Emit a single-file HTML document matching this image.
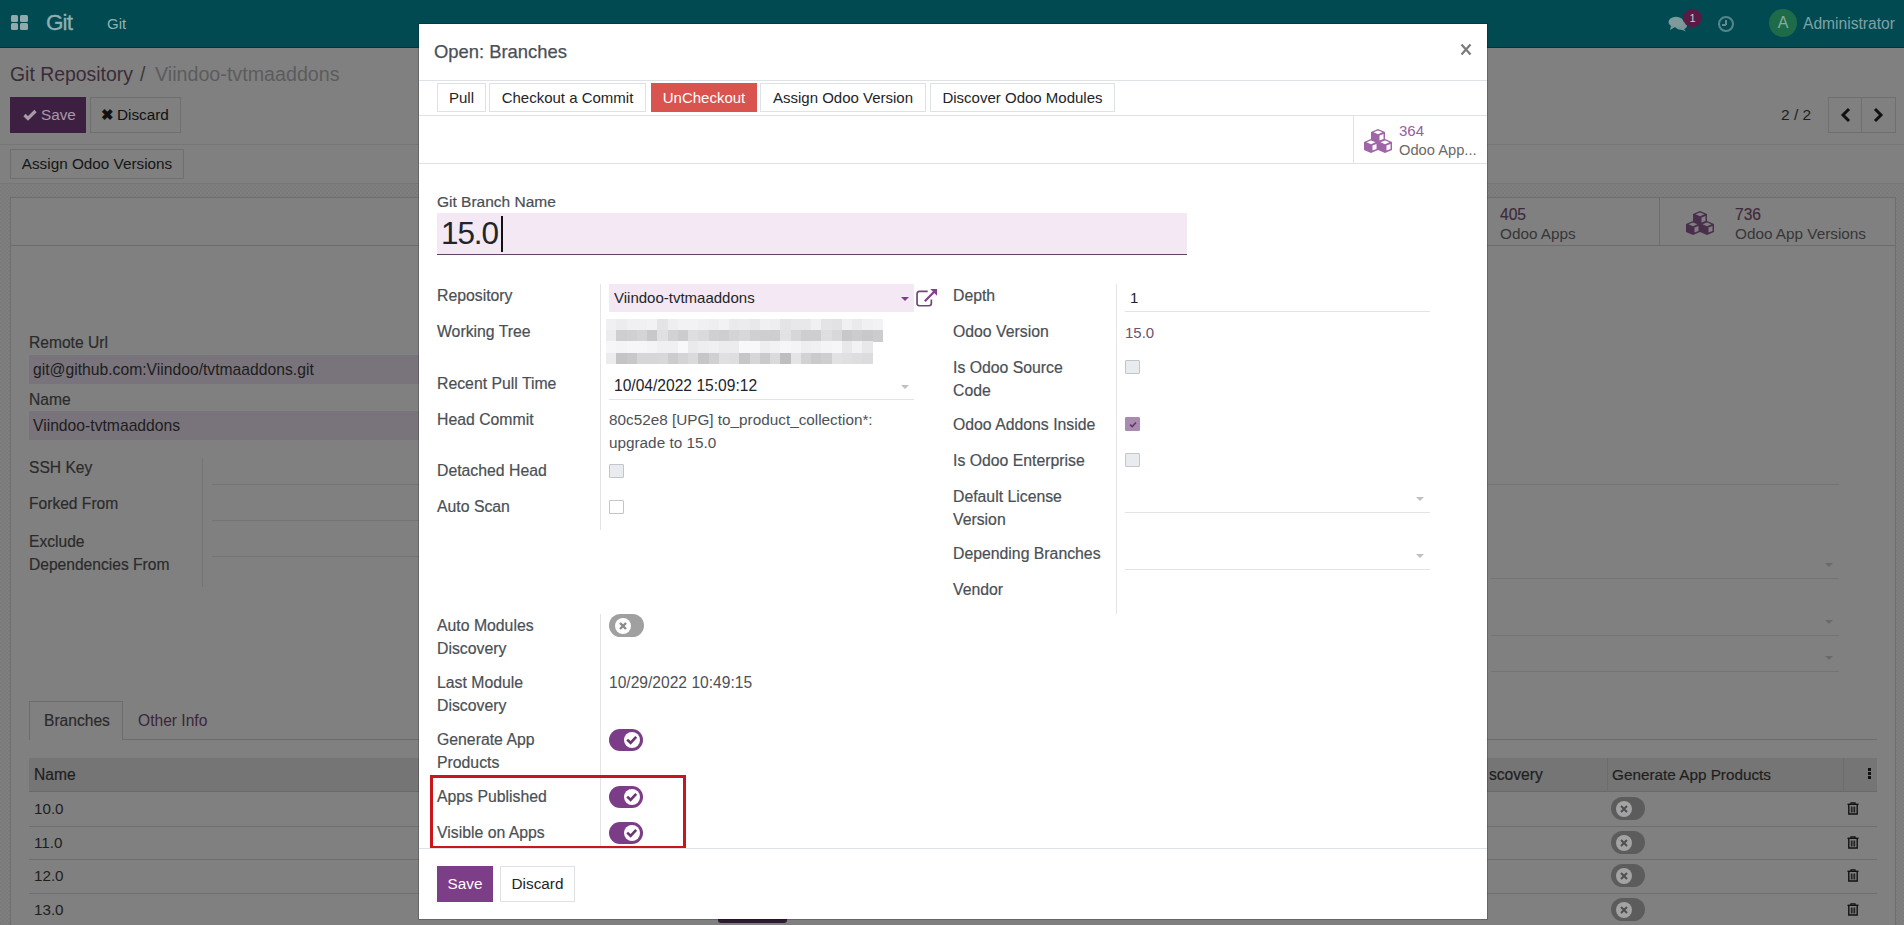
<!DOCTYPE html>
<html><head><meta charset="utf-8">
<style>
*{box-sizing:border-box;margin:0;padding:0}
html,body{width:1904px;height:925px;overflow:hidden}
body{font-family:"Liberation Sans",sans-serif;font-size:15px;color:#212529;background:#808080;position:relative}
.a{position:absolute;white-space:nowrap}
/* background page (already darkened) */
#nav{left:0;top:0;width:1904px;height:48px;background:#024a51;border-bottom:1px solid #01363b}
#cp{left:0;top:48px;width:1904px;height:97px;background:#808080;border-bottom:1px solid #767676}
#sb{left:0;top:145px;width:1904px;height:39px;background:#808080;border-bottom:1px solid #767676}
#bgsheet{left:0;top:184px;width:1904px;height:741px;background:repeating-conic-gradient(#7a7a7a 0 25%,#7f7f7f 0 50%) 0 0/4px 4px}
#sheet{left:10px;top:197px;width:1886px;height:740px;background:#808080;border:1px solid #6e6e6e}
.bbtn{border:1px solid #6f6f6f;background:#808080;color:#111}
.dim{color:#2a2a2a}
/* modal */
#modal{left:418px;top:23px;width:1070px;height:897px;background:#fff;background-clip:padding-box;border:1px solid rgba(0,0,0,.2)}
.mb{position:absolute;border:1px solid #dee2e6;background:#fff;color:#212529;font-size:15px;height:29px;line-height:27px;text-align:center}
.lbl{position:absolute;color:#4a4f55;font-size:15.8px;line-height:23px;white-space:nowrap;-webkit-text-stroke:0.2px #4a4f55}
.val{position:absolute;color:#4c5157;font-size:15px;line-height:23px;white-space:nowrap}
.sep{position:absolute;width:1px;background:#e5e5e5}
.chk{position:absolute;width:15px;height:14px;border:1px solid #c4c4cc;border-radius:1px;background:#fff}
.tog{position:absolute;width:34px;height:22px;border-radius:11px;background:#7b3d88}
.tog i{position:absolute;right:3px;top:3px;width:16px;height:16px;border-radius:50%;background:#fff}
</style></head>
<body>
<!-- NAVBAR -->
<div id="nav" class="a">
  <div class="a" style="left:10.8px;top:15.2px;width:7.6px;height:7.2px;background:#93a9ac;border-radius:1.5px"></div>
  <div class="a" style="left:19.8px;top:15.2px;width:8px;height:7.2px;background:#93a9ac;border-radius:1.5px"></div>
  <div class="a" style="left:10.8px;top:23.4px;width:7.6px;height:7px;background:#93a9ac;border-radius:1.5px"></div>
  <div class="a" style="left:19.8px;top:23.4px;width:8px;height:7px;background:#93a9ac;border-radius:1.5px"></div>
  <div class="a" style="left:46px;top:9.5px;font-size:22.5px;line-height:26px;letter-spacing:-0.9px;color:#8fb0b2;-webkit-text-stroke:0.3px #8fb0b2">Git</div>
  <div class="a" style="left:107px;top:14px;font-size:15px;line-height:20px;color:#8fb2b4">Git</div>
  <svg class="a" style="left:1668px;top:16px" width="20" height="16" viewBox="0 0 20 16"><ellipse cx="8" cy="6" rx="7.5" ry="5.2" fill="#7f9a9b"/><path d="M3 10 L2 14 L7 11z" fill="#7f9a9b"/><ellipse cx="13" cy="9.5" rx="6" ry="4.3" fill="#7f9a9b" opacity=".95"/><path d="M15 12 L18 15.5 L12 13z" fill="#7f9a9b"/></svg>
  <div class="a" style="left:1683px;top:9px;width:19px;height:18px;border-radius:9px;background:#5a1a44;color:#d8c6d2;font-size:11px;line-height:18px;text-align:center">1</div>
  <div class="a" style="left:1718px;top:16px;width:16px;height:16px;border-radius:50%;border:2px solid #55878a"></div>
  <div class="a" style="left:1725px;top:20px;width:1.5px;height:5px;background:#5f8c8f"></div>
  <div class="a" style="left:1722px;top:24px;width:4px;height:1.5px;background:#5f8c8f"></div>
  <div class="a" style="left:1769px;top:9px;width:28px;height:28px;border-radius:50%;background:#1e6b4a;color:#86ab98;font-size:16px;line-height:28px;text-align:center">A</div>
  <div class="a" style="left:1803px;top:14px;font-size:15.6px;line-height:20px;color:#7fa2a4">Administrator</div>
</div>
<!-- CONTROL PANEL -->
<div id="cp" class="a">
  <div class="a" style="left:10px;top:13px;font-size:19.4px;line-height:26px;color:#3b2b38">Git Repository</div><div class="a" style="left:140px;top:13px;font-size:19.4px;line-height:26px;color:#3a3a3a">/</div><div class="a" style="left:155px;top:13px;font-size:19.7px;line-height:26px;color:#5c5c5c">Viindoo-tvtmaaddons</div>
  <div class="a" style="left:10px;top:49px;width:76px;height:36px;background:#3d1f42;color:#a99aab;font-size:15.3px;line-height:36px"><svg class="a" style="left:13px;top:12px" width="14" height="12" viewBox="0 0 14 12"><path d="M1.5 6 L5 9.5 L12.5 2" stroke="#a99aab" stroke-width="3.2" fill="none"/></svg><span style="position:absolute;left:31px">Save</span></div>
  <div class="a bbtn" style="left:90px;top:49px;width:91px;height:36px;font-size:15.3px;line-height:34px"><span style="position:absolute;left:10px;top:0;font-weight:bold">&#10006;</span><span style="position:absolute;left:26px">Discard</span></div>
  <div class="a" style="left:1781px;top:57px;font-size:15.5px;line-height:20px;color:#1e1e1e">2 / 2</div>
  <div class="a bbtn" style="left:1828px;top:49px;width:34px;height:36px"></div>
  <div class="a bbtn" style="left:1861px;top:49px;width:35px;height:36px"></div>
  <svg class="a" style="left:1840px;top:59px" width="12" height="16" viewBox="0 0 12 16"><path d="M9 2 L3 8 L9 14" stroke="#111" stroke-width="3" fill="none"/></svg>
  <svg class="a" style="left:1872px;top:59px" width="12" height="16" viewBox="0 0 12 16"><path d="M3 2 L9 8 L3 14" stroke="#111" stroke-width="3" fill="none"/></svg>
</div>
<div id="sb" class="a">
  <div class="a bbtn" style="left:10px;top:4px;width:174px;height:30px;font-size:15.3px;line-height:28px;text-align:center;color:#151515">Assign Odoo Versions</div>
</div>
<div id="bgsheet" class="a"></div>
<div id="sheet" class="a">
  <div class="a" style="left:0;top:47px;width:1884px;height:1px;background:#6c6c6c"></div>
  <div class="a" style="left:1648px;top:0;width:1px;height:47px;background:#6c6c6c"></div>
  
  <div class="a" style="left:1489px;top:8px;font-size:15.6px;line-height:18px;color:#3e2a3c;-webkit-text-stroke:0.2px #3e2a3c">405</div>
  <div class="a" style="left:1489px;top:27px;font-size:15.3px;line-height:18px;color:#363636">Odoo Apps</div>
  <svg class="a" style="left:1674px;top:12px" width="31" height="26" viewBox="0 0 31 26">
    <g fill="#4a2f4c"><path d="M8 4 L15 1 L22 4 L22 12 L15 15 L8 12z"/><path d="M1 14 L8 11 L15 14 L15 22 L8 25 L1 22z"/><path d="M15 14 L22 11 L29 14 L29 22 L22 25 L15 22z"/></g>
    <g fill="#808080"><path d="M10.5 4.3 L15 2.5 L19.5 4.3 L15 6.2z"/><path d="M16.5 7.5 L20.5 6 L20.5 11 L16.5 12.6z"/><path d="M3.5 14.3 L8 12.5 L12.5 14.3 L8 16.2z"/><path d="M9.5 17.5 L13.5 16 L13.5 21 L9.5 22.6z"/><path d="M17.5 14.3 L22 12.5 L26.5 14.3 L22 16.2z"/><path d="M23.5 17.5 L27.5 16 L27.5 21 L23.5 22.6z"/></g>
  </svg>
  <div class="a" style="left:1724px;top:8px;font-size:15.6px;line-height:18px;color:#3e2a3c;-webkit-text-stroke:0.2px #3e2a3c">736</div>
  <div class="a" style="left:1724px;top:27px;font-size:15.3px;line-height:18px;color:#363636">Odoo App Versions</div>

  <div class="a dim" style="left:18px;top:135px;font-size:15.6px;line-height:20px;color:#2b2b2b;-webkit-text-stroke:0.2px #2b2b2b">Remote Url</div>
  <div class="a" style="left:18px;top:157px;width:800px;height:29px;background:#79737b"></div>
  <div class="a" style="left:22px;top:162px;font-size:15.7px;line-height:20px;color:#1d1d1d">git@github.com:Viindoo/tvtmaaddons.git</div>
  <div class="a dim" style="left:18px;top:192px;font-size:15.6px;line-height:20px;color:#2b2b2b;-webkit-text-stroke:0.2px #2b2b2b">Name</div>
  <div class="a" style="left:18px;top:213px;width:800px;height:29px;background:#79737b"></div>
  <div class="a" style="left:22px;top:218px;font-size:15.7px;line-height:20px;color:#1d1d1d">Viindoo-tvtmaaddons</div>
  <div class="a" style="left:18px;top:260px;font-size:15.6px;line-height:20px;color:#2b2b2b;-webkit-text-stroke:0.2px #2b2b2b">SSH Key</div>
  <div class="a" style="left:18px;top:296px;font-size:15.6px;line-height:20px;color:#2b2b2b;-webkit-text-stroke:0.2px #2b2b2b">Forked From</div>
  <div class="a" style="left:18px;top:332px;font-size:15.6px;line-height:23px;color:#2b2b2b;-webkit-text-stroke:0.2px #2b2b2b">Exclude<br>Dependencies From</div>
  <div class="a" style="left:191px;top:260px;width:1px;height:129px;background:#747474"></div>
  <div class="a" style="left:201px;top:286px;width:700px;height:1px;background:#747474"></div><div class="a" style="left:1300px;top:286px;width:528px;height:1px;background:#747474"></div>
  <div class="a" style="left:201px;top:322px;width:700px;height:1px;background:#747474"></div>
  <div class="a" style="left:201px;top:358px;width:700px;height:1px;background:#747474"></div>
  <div class="a" style="left:1480px;top:380px;width:348px;height:1px;background:#747474"></div>
  <div class="a" style="left:1480px;top:437px;width:348px;height:1px;background:#747474"></div>
  <div class="a" style="left:1480px;top:473px;width:348px;height:1px;background:#747474"></div>
  <svg class="a" style="left:1814px;top:365px" width="8" height="4"><path d="M0 0 L8 0 L4 4z" fill="#6a6a6a"/></svg>
  <svg class="a" style="left:1814px;top:422px" width="8" height="4"><path d="M0 0 L8 0 L4 4z" fill="#6a6a6a"/></svg>
  <svg class="a" style="left:1814px;top:458px" width="8" height="4"><path d="M0 0 L8 0 L4 4z" fill="#6a6a6a"/></svg>

  <!-- tabs -->
  <div class="a" style="left:18px;top:541px;width:1848px;height:1px;background:#6c6c6c"></div>
  <div class="a" style="left:18px;top:503px;width:94px;height:39px;border:1px solid #6c6c6c;border-bottom:none;background:#808080"></div>
  <div class="a" style="left:33px;top:513px;font-size:15.6px;line-height:20px;color:#2b2b2b;-webkit-text-stroke:0.2px #2b2b2b">Branches</div>
  <div class="a" style="left:127px;top:513px;font-size:15.6px;line-height:20px;color:#3b2638">Other Info</div>
  <!-- table -->
  <div class="a" style="left:18px;top:560px;width:1848px;height:34px;background:#757575;border-bottom:1px solid #6a6a6a"></div>
  <div class="a" style="left:23px;top:567px;font-size:15.6px;line-height:20px;color:#1e1e1e;-webkit-text-stroke:0.2px #1e1e1e">Name</div>
  <div class="a" style="left:1478px;top:567px;font-size:15.6px;line-height:20px;color:#1e1e1e;-webkit-text-stroke:0.2px #1e1e1e">scovery</div>
  <div class="a" style="left:1596px;top:560px;width:1px;height:34px;background:#6c6c6c"></div>
  <div class="a" style="left:1601px;top:567px;font-size:15.3px;line-height:20px;color:#1e1e1e;-webkit-text-stroke:0.2px #1e1e1e">Generate App Products</div>
  <div class="a" style="left:1832px;top:560px;width:1px;height:34px;background:#6c6c6c"></div>
  <div class="a" style="left:1857px;top:570px;width:3px;height:3px;background:#111;box-shadow:0 4px 0 #111,0 8px 0 #111"></div>
<div class="a" style="left:18px;top:628px;width:1848px;height:1px;background:#6e6e6e"></div>
<div class="a" style="left:23px;top:601px;font-size:15.2px;line-height:20px;color:#1e1e1e">10.0</div>
<div class="a" style="left:1600px;top:599px;width:34px;height:23px;border-radius:12px;background:#5c5c5c"><div class="a" style="left:5px;top:3.5px;width:16px;height:16px;border-radius:50%;background:#a3a3a3"></div><svg class="a" style="left:9px;top:7.5px" width="8" height="8"><path d="M1 1 L7 7 M7 1 L1 7" stroke="#4e4e52" stroke-width="2"/></svg></div>
<svg class="a" style="left:1836px;top:604px" width="12" height="13" viewBox="0 0 12 13"><path d="M4 2 V0.8 H8 V2" stroke="#111" stroke-width="1.2" fill="none"/><path d="M0.5 2.3 H11.5" stroke="#111" stroke-width="1.4"/><path d="M1.8 3 V12 H10.2 V3" stroke="#111" stroke-width="1.4" fill="none"/><path d="M4.3 4.5 V10.5 M6 4.5 V10.5 M7.7 4.5 V10.5" stroke="#111" stroke-width="1"/></svg>
<div class="a" style="left:18px;top:661px;width:1848px;height:1px;background:#6e6e6e"></div>
<div class="a" style="left:23px;top:635px;font-size:15.2px;line-height:20px;color:#1e1e1e">11.0</div>
<div class="a" style="left:1600px;top:633px;width:34px;height:23px;border-radius:12px;background:#5c5c5c"><div class="a" style="left:5px;top:3.5px;width:16px;height:16px;border-radius:50%;background:#a3a3a3"></div><svg class="a" style="left:9px;top:7.5px" width="8" height="8"><path d="M1 1 L7 7 M7 1 L1 7" stroke="#4e4e52" stroke-width="2"/></svg></div>
<svg class="a" style="left:1836px;top:638px" width="12" height="13" viewBox="0 0 12 13"><path d="M4 2 V0.8 H8 V2" stroke="#111" stroke-width="1.2" fill="none"/><path d="M0.5 2.3 H11.5" stroke="#111" stroke-width="1.4"/><path d="M1.8 3 V12 H10.2 V3" stroke="#111" stroke-width="1.4" fill="none"/><path d="M4.3 4.5 V10.5 M6 4.5 V10.5 M7.7 4.5 V10.5" stroke="#111" stroke-width="1"/></svg>
<div class="a" style="left:18px;top:695px;width:1848px;height:1px;background:#6e6e6e"></div>
<div class="a" style="left:23px;top:668px;font-size:15.2px;line-height:20px;color:#1e1e1e">12.0</div>
<div class="a" style="left:1600px;top:666px;width:34px;height:23px;border-radius:12px;background:#5c5c5c"><div class="a" style="left:5px;top:3.5px;width:16px;height:16px;border-radius:50%;background:#a3a3a3"></div><svg class="a" style="left:9px;top:7.5px" width="8" height="8"><path d="M1 1 L7 7 M7 1 L1 7" stroke="#4e4e52" stroke-width="2"/></svg></div>
<svg class="a" style="left:1836px;top:671px" width="12" height="13" viewBox="0 0 12 13"><path d="M4 2 V0.8 H8 V2" stroke="#111" stroke-width="1.2" fill="none"/><path d="M0.5 2.3 H11.5" stroke="#111" stroke-width="1.4"/><path d="M1.8 3 V12 H10.2 V3" stroke="#111" stroke-width="1.4" fill="none"/><path d="M4.3 4.5 V10.5 M6 4.5 V10.5 M7.7 4.5 V10.5" stroke="#111" stroke-width="1"/></svg>
<div class="a" style="left:18px;top:999px;width:1848px;height:1px;background:#6e6e6e"></div>
<div class="a" style="left:23px;top:702px;font-size:15.2px;line-height:20px;color:#1e1e1e">13.0</div>
<div class="a" style="left:1600px;top:700px;width:34px;height:23px;border-radius:12px;background:#5c5c5c"><div class="a" style="left:5px;top:3.5px;width:16px;height:16px;border-radius:50%;background:#a3a3a3"></div><svg class="a" style="left:9px;top:7.5px" width="8" height="8"><path d="M1 1 L7 7 M7 1 L1 7" stroke="#4e4e52" stroke-width="2"/></svg></div>
<svg class="a" style="left:1836px;top:705px" width="12" height="13" viewBox="0 0 12 13"><path d="M4 2 V0.8 H8 V2" stroke="#111" stroke-width="1.2" fill="none"/><path d="M0.5 2.3 H11.5" stroke="#111" stroke-width="1.4"/><path d="M1.8 3 V12 H10.2 V3" stroke="#111" stroke-width="1.4" fill="none"/><path d="M4.3 4.5 V10.5 M6 4.5 V10.5 M7.7 4.5 V10.5" stroke="#111" stroke-width="1"/></svg>
  <div class="a" style="left:707px;top:721px;width:69px;height:4px;background:#2e1a33;border-radius:0 0 3px 3px"></div>
</div>
<div id="modal" class="a">
  <!-- header -->
  <div class="a" style="left:15px;top:15.5px;font-size:18.4px;line-height:24px;color:#495057;-webkit-text-stroke:0.25px #495057">Open: Branches</div>
  <svg class="a" style="left:1041px;top:19px" width="12" height="13" viewBox="0 0 12 13"><path d="M1.5 1.5 L10.5 11.5 M10.5 1.5 L1.5 11.5" stroke="#7a7a7a" stroke-width="2.2"/></svg>
  <div class="a" style="left:0;top:56px;width:1068px;height:1px;background:#dee2e6"></div>
  <!-- button bar -->
  <div class="mb" style="left:18px;top:59px;width:49px">Pull</div>
  <div class="mb" style="left:70px;top:59px;width:157px">Checkout a Commit</div>
  <div class="mb" style="left:232px;top:59px;width:106px;background:#d9534f;border-color:#d9534f;color:#fff">UnCheckout</div>
  <div class="mb" style="left:341px;top:59px;width:166px">Assign Odoo Version</div>
  <div class="mb" style="left:511px;top:59px;width:185px">Discover Odoo Modules</div>
  <div class="a" style="left:0;top:91px;width:1068px;height:1px;background:#dee2e6"></div>
  <!-- button box -->
  <div class="a" style="left:934px;top:92px;width:1px;height:47px;background:#dee2e6"></div>
  <svg class="a" style="left:944px;top:104px" width="31" height="26" viewBox="0 0 31 26">
    <g fill="#a065a8">
      <path d="M8 4 L15 1 L22 4 L22 12 L15 15 L8 12z"/>
      <path d="M1 14 L8 11 L15 14 L15 22 L8 25 L1 22z"/>
      <path d="M15 14 L22 11 L29 14 L29 22 L22 25 L15 22z"/>
    </g>
    <g fill="#fff">
      <path d="M10.5 4.3 L15 2.5 L19.5 4.3 L15 6.2z"/>
      <path d="M16.5 7.5 L20.5 6 L20.5 11 L16.5 12.6z"/>
      <path d="M3.5 14.3 L8 12.5 L12.5 14.3 L8 16.2z"/>
      <path d="M9.5 17.5 L13.5 16 L13.5 21 L9.5 22.6z"/>
      <path d="M17.5 14.3 L22 12.5 L26.5 14.3 L22 16.2z"/>
      <path d="M23.5 17.5 L27.5 16 L27.5 21 L23.5 22.6z"/>
    </g>
  </svg>
  <div class="a" style="left:980px;top:98px;font-size:15px;line-height:18px;color:#9a5ba3">364</div>
  <div class="a" style="left:980px;top:117px;font-size:14.7px;line-height:18px;color:#6a6a6a">Odoo App...</div>
  <div class="a" style="left:0;top:139px;width:1068px;height:1px;background:#dee2e6"></div>

  <!-- title field -->
  <div class="lbl" style="left:18px;top:166px;font-size:15.5px">Git Branch Name</div>
  <div class="a" style="left:18px;top:189px;width:750px;height:42px;background:#f3e8f4;border-bottom:1px solid #5e4663"></div>
  <div class="a" style="left:22px;top:190px;font-size:31.5px;line-height:38px;letter-spacing:-1.1px;color:#212529">15.0</div>
  <div class="a" style="left:82px;top:192px;width:2px;height:36px;background:#111"></div>

  <!-- left group -->
  <div class="lbl" style="left:18px;top:260px">Repository</div>
  <div class="lbl" style="left:18px;top:296px">Working Tree</div>
  <div class="lbl" style="left:18px;top:348px">Recent Pull Time</div>
  <div class="lbl" style="left:18px;top:384px">Head Commit</div>
  <div class="lbl" style="left:18px;top:435px">Detached Head</div>
  <div class="lbl" style="left:18px;top:471px">Auto Scan</div>
  <div class="sep" style="left:181px;top:260px;height:246px"></div>

  <div class="a" style="left:190px;top:260px;width:305px;height:28px;background:#f3e8f4"></div>
  <div class="val" style="left:195px;top:262px;color:#212529">Viindoo-tvtmaaddons</div>
  <svg class="a" style="left:482px;top:273px" width="8" height="4"><path d="M0 0 L8 0 L4 4z" fill="#7c3e86"/></svg>
  <svg class="a" style="left:496px;top:264px" width="23" height="20" viewBox="0 0 23 20"><path d="M12.7 3.45 H4.5 Q2.05 3.45 2.05 5.9 V15.3 Q2.05 17.75 4.5 17.75 H13.9 Q16.35 17.75 16.35 15.3 V11.5" stroke="#6e4a70" stroke-width="1.7" fill="none"/><path d="M9.8 13.2 L19.2 3.8" stroke="#83408c" stroke-width="2.3"/><path d="M15.3 1 H22 V7.8z" fill="#83408c"/></svg>

  <svg class="a" style="left:187px;top:295px" width="278" height="46" shape-rendering="crispEdges"><rect x="0.00" y="0.00" width="10.55" height="11.50" fill="rgb(240,240,242)"/><rect x="10.25" y="0.00" width="10.55" height="11.50" fill="rgb(236,236,238)"/><rect x="20.50" y="0.00" width="10.55" height="11.50" fill="rgb(240,240,242)"/><rect x="30.75" y="0.00" width="10.55" height="11.50" fill="rgb(240,240,242)"/><rect x="41.00" y="0.00" width="10.55" height="11.50" fill="rgb(242,242,244)"/><rect x="51.25" y="0.00" width="10.55" height="11.50" fill="rgb(228,228,230)"/><rect x="61.50" y="0.00" width="10.55" height="11.50" fill="rgb(238,238,240)"/><rect x="71.75" y="0.00" width="10.55" height="11.50" fill="rgb(242,242,244)"/><rect x="82.00" y="0.00" width="10.55" height="11.50" fill="rgb(242,242,244)"/><rect x="92.25" y="0.00" width="10.55" height="11.50" fill="rgb(240,240,242)"/><rect x="102.50" y="0.00" width="10.55" height="11.50" fill="rgb(238,238,240)"/><rect x="112.75" y="0.00" width="10.55" height="11.50" fill="rgb(242,242,244)"/><rect x="123.00" y="0.00" width="10.55" height="11.50" fill="rgb(234,234,236)"/><rect x="133.25" y="0.00" width="10.55" height="11.50" fill="rgb(236,236,238)"/><rect x="143.50" y="0.00" width="10.55" height="11.50" fill="rgb(232,232,234)"/><rect x="153.75" y="0.00" width="10.55" height="11.50" fill="rgb(240,240,242)"/><rect x="164.00" y="0.00" width="10.55" height="11.50" fill="rgb(238,238,240)"/><rect x="174.25" y="0.00" width="10.55" height="11.50" fill="rgb(228,228,230)"/><rect x="184.50" y="0.00" width="10.55" height="11.50" fill="rgb(232,232,234)"/><rect x="194.75" y="0.00" width="10.55" height="11.50" fill="rgb(232,232,234)"/><rect x="205.00" y="0.00" width="10.55" height="11.50" fill="rgb(240,240,242)"/><rect x="215.25" y="0.00" width="10.55" height="11.50" fill="rgb(228,228,230)"/><rect x="225.50" y="0.00" width="10.55" height="11.50" fill="rgb(226,226,228)"/><rect x="235.75" y="0.00" width="10.55" height="11.50" fill="rgb(240,240,242)"/><rect x="246.00" y="0.00" width="10.55" height="11.50" fill="rgb(234,234,236)"/><rect x="256.25" y="0.00" width="10.55" height="11.50" fill="rgb(240,240,242)"/><rect x="266.50" y="0.00" width="10.55" height="11.50" fill="rgb(242,242,244)"/><rect x="0.00" y="11.20" width="10.55" height="11.50" fill="rgb(236,236,238)"/><rect x="10.25" y="11.20" width="10.55" height="11.50" fill="rgb(206,206,208)"/><rect x="20.50" y="11.20" width="10.55" height="11.50" fill="rgb(208,208,210)"/><rect x="30.75" y="11.20" width="10.55" height="11.50" fill="rgb(212,212,214)"/><rect x="41.00" y="11.20" width="10.55" height="11.50" fill="rgb(200,200,202)"/><rect x="51.25" y="11.20" width="10.55" height="11.50" fill="rgb(224,224,226)"/><rect x="61.50" y="11.20" width="10.55" height="11.50" fill="rgb(210,210,212)"/><rect x="71.75" y="11.20" width="10.55" height="11.50" fill="rgb(204,204,206)"/><rect x="82.00" y="11.20" width="10.55" height="11.50" fill="rgb(222,222,224)"/><rect x="92.25" y="11.20" width="10.55" height="11.50" fill="rgb(218,218,220)"/><rect x="102.50" y="11.20" width="10.55" height="11.50" fill="rgb(208,208,210)"/><rect x="112.75" y="11.20" width="10.55" height="11.50" fill="rgb(206,206,208)"/><rect x="123.00" y="11.20" width="10.55" height="11.50" fill="rgb(212,212,214)"/><rect x="133.25" y="11.20" width="10.55" height="11.50" fill="rgb(216,216,218)"/><rect x="143.50" y="11.20" width="10.55" height="11.50" fill="rgb(208,208,210)"/><rect x="153.75" y="11.20" width="10.55" height="11.50" fill="rgb(206,206,208)"/><rect x="164.00" y="11.20" width="10.55" height="11.50" fill="rgb(206,206,208)"/><rect x="174.25" y="11.20" width="10.55" height="11.50" fill="rgb(226,226,228)"/><rect x="184.50" y="11.20" width="10.55" height="11.50" fill="rgb(214,214,216)"/><rect x="194.75" y="11.20" width="10.55" height="11.50" fill="rgb(206,206,208)"/><rect x="205.00" y="11.20" width="10.55" height="11.50" fill="rgb(206,206,208)"/><rect x="215.25" y="11.20" width="10.55" height="11.50" fill="rgb(222,222,224)"/><rect x="225.50" y="11.20" width="10.55" height="11.50" fill="rgb(216,216,218)"/><rect x="235.75" y="11.20" width="10.55" height="11.50" fill="rgb(200,200,202)"/><rect x="246.00" y="11.20" width="10.55" height="11.50" fill="rgb(204,204,206)"/><rect x="256.25" y="11.20" width="10.55" height="11.50" fill="rgb(200,200,202)"/><rect x="266.50" y="11.20" width="10.55" height="11.50" fill="rgb(204,204,206)"/><rect x="0.00" y="22.40" width="10.55" height="11.50" fill="rgb(246,246,248)"/><rect x="10.25" y="22.40" width="10.55" height="11.50" fill="rgb(244,244,246)"/><rect x="20.50" y="22.40" width="10.55" height="11.50" fill="rgb(246,246,248)"/><rect x="30.75" y="22.40" width="10.55" height="11.50" fill="rgb(246,246,248)"/><rect x="41.00" y="22.40" width="10.55" height="11.50" fill="rgb(244,244,246)"/><rect x="51.25" y="22.40" width="10.55" height="11.50" fill="rgb(240,240,242)"/><rect x="61.50" y="22.40" width="10.55" height="11.50" fill="rgb(240,240,242)"/><rect x="71.75" y="22.40" width="10.55" height="11.50" fill="rgb(248,248,250)"/><rect x="82.00" y="22.40" width="10.55" height="11.50" fill="rgb(234,234,236)"/><rect x="92.25" y="22.40" width="10.55" height="11.50" fill="rgb(238,238,240)"/><rect x="102.50" y="22.40" width="10.55" height="11.50" fill="rgb(240,240,242)"/><rect x="112.75" y="22.40" width="10.55" height="11.50" fill="rgb(236,236,238)"/><rect x="123.00" y="22.40" width="10.55" height="11.50" fill="rgb(236,236,238)"/><rect x="133.25" y="22.40" width="10.55" height="11.50" fill="rgb(248,248,250)"/><rect x="143.50" y="22.40" width="10.55" height="11.50" fill="rgb(248,248,250)"/><rect x="153.75" y="22.40" width="10.55" height="11.50" fill="rgb(238,238,240)"/><rect x="164.00" y="22.40" width="10.55" height="11.50" fill="rgb(242,242,244)"/><rect x="174.25" y="22.40" width="10.55" height="11.50" fill="rgb(246,246,248)"/><rect x="184.50" y="22.40" width="10.55" height="11.50" fill="rgb(244,244,246)"/><rect x="194.75" y="22.40" width="10.55" height="11.50" fill="rgb(238,238,240)"/><rect x="205.00" y="22.40" width="10.55" height="11.50" fill="rgb(240,240,242)"/><rect x="215.25" y="22.40" width="10.55" height="11.50" fill="rgb(244,244,246)"/><rect x="225.50" y="22.40" width="10.55" height="11.50" fill="rgb(246,246,248)"/><rect x="235.75" y="22.40" width="10.55" height="11.50" fill="rgb(232,232,234)"/><rect x="246.00" y="22.40" width="10.55" height="11.50" fill="rgb(242,242,244)"/><rect x="256.25" y="22.40" width="10.55" height="11.50" fill="rgb(232,232,234)"/><rect x="0.00" y="33.60" width="10.55" height="11.50" fill="rgb(236,236,238)"/><rect x="10.25" y="33.60" width="10.55" height="11.50" fill="rgb(196,196,198)"/><rect x="20.50" y="33.60" width="10.55" height="11.50" fill="rgb(200,200,202)"/><rect x="30.75" y="33.60" width="10.55" height="11.50" fill="rgb(214,214,216)"/><rect x="41.00" y="33.60" width="10.55" height="11.50" fill="rgb(214,214,216)"/><rect x="51.25" y="33.60" width="10.55" height="11.50" fill="rgb(216,216,218)"/><rect x="61.50" y="33.60" width="10.55" height="11.50" fill="rgb(204,204,206)"/><rect x="71.75" y="33.60" width="10.55" height="11.50" fill="rgb(212,212,214)"/><rect x="82.00" y="33.60" width="10.55" height="11.50" fill="rgb(218,218,220)"/><rect x="92.25" y="33.60" width="10.55" height="11.50" fill="rgb(198,198,200)"/><rect x="102.50" y="33.60" width="10.55" height="11.50" fill="rgb(208,208,210)"/><rect x="112.75" y="33.60" width="10.55" height="11.50" fill="rgb(224,224,226)"/><rect x="123.00" y="33.60" width="10.55" height="11.50" fill="rgb(222,222,224)"/><rect x="133.25" y="33.60" width="10.55" height="11.50" fill="rgb(198,198,200)"/><rect x="143.50" y="33.60" width="10.55" height="11.50" fill="rgb(214,214,216)"/><rect x="153.75" y="33.60" width="10.55" height="11.50" fill="rgb(202,202,204)"/><rect x="164.00" y="33.60" width="10.55" height="11.50" fill="rgb(218,218,220)"/><rect x="174.25" y="33.60" width="10.55" height="11.50" fill="rgb(190,190,192)"/><rect x="184.50" y="33.60" width="10.55" height="11.50" fill="rgb(228,228,230)"/><rect x="194.75" y="33.60" width="10.55" height="11.50" fill="rgb(210,210,212)"/><rect x="205.00" y="33.60" width="10.55" height="11.50" fill="rgb(202,202,204)"/><rect x="215.25" y="33.60" width="10.55" height="11.50" fill="rgb(206,206,208)"/><rect x="225.50" y="33.60" width="10.55" height="11.50" fill="rgb(226,226,228)"/><rect x="235.75" y="33.60" width="10.55" height="11.50" fill="rgb(224,224,226)"/><rect x="246.00" y="33.60" width="10.55" height="11.50" fill="rgb(222,222,224)"/><rect x="256.25" y="33.60" width="10.55" height="11.50" fill="rgb(220,220,222)"/></svg>

  <div class="val" style="left:195px;top:350px;color:#212529;font-size:15.6px">10/04/2022 15:09:12</div>
  <svg class="a" style="left:482px;top:361px" width="8" height="4"><path d="M0 0 L8 0 L4 4z" fill="#c0c0c0"/></svg>
  <div class="a" style="left:190px;top:375px;width:305px;height:1px;background:#e3e3e3"></div>
  <div class="val" style="left:190px;top:384px;font-size:15.3px">80c52e8 [UPG] to_product_collection*:<br>upgrade to 15.0</div>
  <div class="chk" style="left:190px;top:440px;background:#e9ecef"></div>
  <div class="chk" style="left:190px;top:476px"></div>

  <!-- right group -->
  <div class="lbl" style="left:534px;top:260px">Depth</div>
  <div class="lbl" style="left:534px;top:296px">Odoo Version</div>
  <div class="lbl" style="left:534px;top:332px">Is Odoo Source<br>Code</div>
  <div class="lbl" style="left:534px;top:389px">Odoo Addons Inside</div>
  <div class="lbl" style="left:534px;top:425px">Is Odoo Enterprise</div>
  <div class="lbl" style="left:534px;top:461px">Default License<br>Version</div>
  <div class="lbl" style="left:534px;top:518px">Depending Branches</div>
  <div class="lbl" style="left:534px;top:554px">Vendor</div>
  <div class="sep" style="left:697px;top:260px;height:330px"></div>

  <div class="val" style="left:711px;top:262px;color:#212529">1</div>
  <div class="a" style="left:706px;top:287px;width:305px;height:1px;background:#e3e3e3"></div>
  <div class="val" style="left:706px;top:297px;color:#6a5470">15.0</div>
  <div class="chk" style="left:706px;top:336px;background:#e9ecef"></div>
  <div class="chk" style="left:706px;top:393px;background:#a98bb1;border-color:#a98bb1"></div>
  <svg class="a" style="left:710px;top:397px" width="8" height="7"><path d="M1 3.6 L3.2 5.6 L7 1.6" stroke="#5b3a60" stroke-width="1.5" fill="none"/></svg>
  <div class="chk" style="left:706px;top:429px;background:#e9ecef"></div>
  <svg class="a" style="left:997px;top:473px" width="8" height="4"><path d="M0 0 L8 0 L4 4z" fill="#c0c0c0"/></svg>
  <div class="a" style="left:706px;top:488px;width:305px;height:1px;background:#e3e3e3"></div>
  <svg class="a" style="left:997px;top:530px" width="8" height="4"><path d="M0 0 L8 0 L4 4z" fill="#c0c0c0"/></svg>
  <div class="a" style="left:706px;top:545px;width:305px;height:1px;background:#e3e3e3"></div>

  <!-- lower group -->
  <div class="lbl" style="left:18px;top:590px">Auto Modules<br>Discovery</div>
  <div class="lbl" style="left:18px;top:647px">Last Module<br>Discovery</div>
  <div class="lbl" style="left:18px;top:704px">Generate App<br>Products</div>
  <div class="lbl" style="left:18px;top:761px">Apps Published</div>
  <div class="lbl" style="left:18px;top:797px">Visible on Apps</div>
  <div class="sep" style="left:181px;top:590px;height:234px"></div>

  <div class="tog" style="left:190px;top:590px;width:35px;height:23px;border-radius:11.5px;background:#a0a0a0"><i style="left:6px;right:auto;top:3.5px"></i><svg class="a" style="left:10px;top:7.5px" width="8" height="8"><path d="M1 1 L7 7 M7 1 L1 7" stroke="#8a8a8a" stroke-width="2.4"/></svg></div>
  <div class="val" style="left:190px;top:647px;font-size:15.6px">10/29/2022 10:49:15</div>
  <div class="tog" style="left:190px;top:705px"><i></i><svg class="a" style="left:17px;top:6px" width="12" height="10"><path d="M1.2 4.6 L4.6 7.8 L10.2 1.8" stroke="#6a3570" stroke-width="2.6" fill="none"/></svg></div>
  <div class="tog" style="left:190px;top:762px"><i></i><svg class="a" style="left:17px;top:6px" width="12" height="10"><path d="M1.2 4.6 L4.6 7.8 L10.2 1.8" stroke="#6a3570" stroke-width="2.6" fill="none"/></svg></div>
  <div class="tog" style="left:190px;top:798px"><i></i><svg class="a" style="left:17px;top:6px" width="12" height="10"><path d="M1.2 4.6 L4.6 7.8 L10.2 1.8" stroke="#6a3570" stroke-width="2.6" fill="none"/></svg></div>

  <div class="a" style="left:11px;top:751px;width:256px;height:74px;border:3px solid #c8161d"></div>
  <!-- footer -->
  <div class="a" style="left:0;top:824px;width:1068px;height:1px;background:#dee2e6"></div>
  <div class="a" style="left:18px;top:842px;width:56px;height:36px;background:#7c3e86;color:#fff;font-size:15.3px;line-height:36px;text-align:center">Save</div>
  <div class="a" style="left:81px;top:842px;width:75px;height:36px;border:1px solid #dee2e6;color:#212529;font-size:15.3px;line-height:34px;text-align:center">Discard</div>
</div>
</body></html>
